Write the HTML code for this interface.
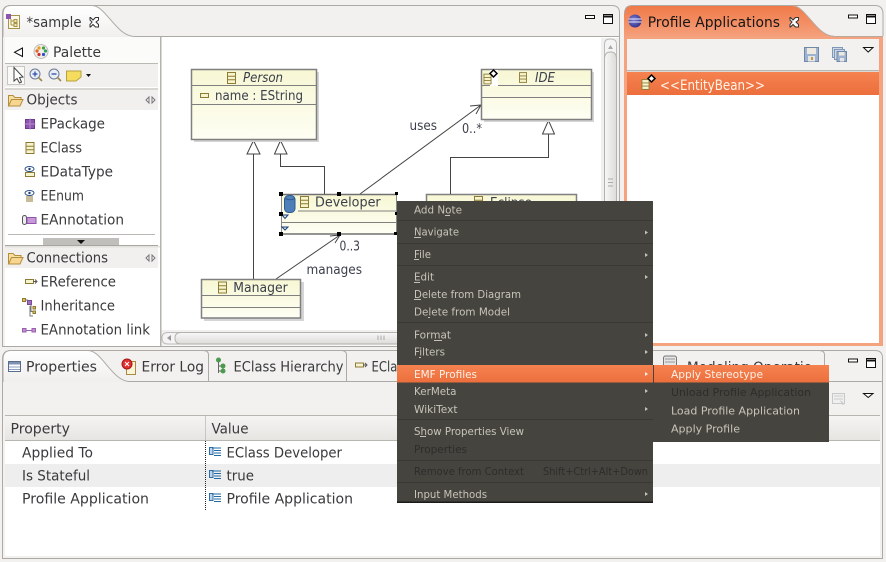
<!DOCTYPE html>
<html><head><meta charset="utf-8"><style>
html,body{margin:0;padding:0;background:#f2f1f0}
svg{display:block}
text{font-family:"DejaVu Sans","Liberation Sans",sans-serif;font-size:14px;fill:#3a3a3c}
.m{font-size:11px;fill:#c8c4b8}
.d{font-size:11px;fill:#2e2d2a}
.w{font-size:11px;fill:#fdf0e6}
.n{font-size:13px;fill:#3b3f4a}
.i{font-size:13px;font-style:italic;fill:#3b3f4a}
.u{stroke:#c4c0b4;stroke-width:1}
.sep{stroke:#3a3936;stroke-width:1}
.b{fill:none;stroke:#adaaa5;stroke-width:1}
.l{fill:none;stroke:#444;stroke-width:1}
.nd{stroke:#7f7f7f;stroke-width:1.5;fill:url(#ng)}
.arw{fill:#c4c0b4}
</style></head><body>
<svg width="886" height="562" viewBox="0 0 886 562" xmlns="http://www.w3.org/2000/svg">
<defs>
<linearGradient id="tab" x1="0" y1="0" x2="0" y2="1"><stop offset="0" stop-color="#ffffff"/><stop offset="1" stop-color="#f0efed"/></linearGradient>
<linearGradient id="otab" x1="0" y1="0" x2="0" y2="1"><stop offset="0" stop-color="#f07a48"/><stop offset="1" stop-color="#f5a27f"/></linearGradient>
<linearGradient id="sel" x1="0" y1="0" x2="0" y2="1"><stop offset="0" stop-color="#f58250"/><stop offset="1" stop-color="#ec6f3d"/></linearGradient>
<linearGradient id="ng" x1="0" y1="0" x2="0" y2="1"><stop offset="0" stop-color="#f7f7d4"/><stop offset="1" stop-color="#fefef4"/></linearGradient>
<linearGradient id="hdr" x1="0" y1="0" x2="0" y2="1"><stop offset="0" stop-color="#f6f5f4"/><stop offset="1" stop-color="#e6e5e2"/></linearGradient>
<linearGradient id="vs" x1="0" y1="0" x2="1" y2="0"><stop offset="0" stop-color="#f8f8f8"/><stop offset="1" stop-color="#dcdbd9"/></linearGradient>
<linearGradient id="hs" x1="0" y1="0" x2="0" y2="1"><stop offset="0" stop-color="#f8f8f8"/><stop offset="1" stop-color="#dcdbd9"/></linearGradient>
<radialGradient id="ec" cx=".4" cy=".4" r=".7"><stop offset="0" stop-color="#7f7fd8"/><stop offset="1" stop-color="#2a2a80"/></radialGradient>
<clipPath id="eclip"><rect x="426" y="190" width="151" height="11"/></clipPath>
<clipPath id="modclip"><rect x="655" y="350" width="170" height="15"/></clipPath>
<symbol id="cls" viewBox="0 0 9 12" overflow="visible"><rect x=".5" y=".5" width="8" height="11" fill="#f6f4cc" stroke="#8d7a35"/><path d="M.5 4.200H8.500M.5 7.800H8.500" stroke="#8d7a35"/></symbol>
<symbol id="lst" viewBox="0 0 13 10"><rect x=".5" y=".5" width="3.500" height="7" fill="#bcd4ec" stroke="#2d6ea8"/><path d="M3 1H12M5 3.500H12M5 6H12M5 8.500H12" stroke="#1f6aa5" stroke-width="1.100"/></symbol>
</defs>

<rect width="886" height="562" fill="#f2f1f0"/>

<!-- EDITOR PANE -->
<rect x="5" y="37" width="614" height="309" fill="#fff"/>
<path class="b" d="M2.500 346.500V14Q2.500 5.500 11 5.500H612Q619.500 5.500 619.500 13V346.500H2.500Z"/>
<path d="M3 37V14Q3 6 11 6H92C106 6 116 36 135 36V37Z" fill="url(#tab)"/>
<path class="b" d="M3 37V14Q3 5.500 11 5.500H92C106 5.500 116 36.500 135 36.500H619"/>
<rect x="3" y="347" width="617" height="2" fill="#f2f1f0"/>

<!-- tab *sample -->
<path d="M8.500 15.500H19.500V28.500H8.500Z" fill="#fbf9ea" stroke="#a6924a"/>
<rect x="6" y="14" width="5" height="5" fill="#8e55b0"/>
<path d="M11 21H14M11 25H14M11 19V25" stroke="#a6924a" fill="none"/>
<rect x="14" y="19.500" width="3" height="3" fill="#f6e8a8" stroke="#a6924a"/><rect x="14" y="23.500" width="3" height="3" fill="#f6e8a8" stroke="#a6924a"/>
<text x="26.500" y="27" textLength="55" lengthAdjust="spacingAndGlyphs">*sample</text>
<path d="M90.500 17.500L93 20L95.500 17.500L98.500 17.500L98.500 20L96 22L98.500 24.500L98.500 27L95.500 27L93 24.500L90.500 27L90 27L90 24.500L92 22L90 20L90 17.500Z" fill="#fff" stroke="#333" stroke-width="1"/>
<rect x="585.500" y="15.500" width="9" height="3" fill="#fff" stroke="#111"/>
<rect x="603.500" y="14.500" width="9" height="9" fill="#fff" stroke="#111"/><path d="M603 16.500H613" stroke="#111" stroke-width="2"/>

<!-- palette -->
<rect x="5" y="37" width="155" height="26" fill="#fbfbfa"/>
<rect x="5" y="63" width="153" height="1" fill="#bbb9b4"/>
<rect x="5" y="64" width="153" height="23" fill="#f1f0ee"/>
<rect x="5" y="88" width="153" height="2" fill="#d8d6d2"/>
<rect x="5" y="90" width="153" height="20" fill="#f1f0ee"/>
<rect x="5" y="110" width="155" height="124" fill="#fff"/>
<rect x="160" y="37" width="1.500" height="309" fill="#b5b3ae"/>
<path d="M22.500 48V56.500L14.500 52.300Z" fill="#fff" stroke="#111"/>
<circle cx="41" cy="51.500" r="7" fill="#f0efe9" stroke="#bdbdbd"/>
<circle cx="39" cy="48" r="1.600" fill="#e8a020"/><circle cx="43.500" cy="48" r="1.600" fill="#44a044"/>
<circle cx="37" cy="51" r="1.600" fill="#e86020"/><circle cx="45.500" cy="51" r="1.600" fill="#30a060"/>
<circle cx="39" cy="54.500" r="1.600" fill="#d03030"/><circle cx="43.500" cy="54.500" r="1.600" fill="#3050d0"/>
<text x="53" y="57" textLength="48" lengthAdjust="spacingAndGlyphs">Palette</text>
<rect x="7.500" y="66.500" width="17" height="18" fill="#f9f9f8" stroke="#c8c6c2"/>
<path d="M14 67.500V81L17 78.500L19.500 83L21.500 82L19.500 77.500L23 77Z" fill="#fff" stroke="#444"/>
<circle cx="35" cy="74" r="5" fill="#e8edf6" stroke="#6b7a94"/><path d="M32.500 74H37.500M35 71.500V76.500" stroke="#2a4fa8" stroke-width="1.300"/><path d="M38.500 77.500L42 81" stroke="#a08848" stroke-width="1.600"/>
<circle cx="54" cy="74" r="5" fill="#e8edf6" stroke="#6b7a94"/><path d="M51.500 74H56.500" stroke="#2a4fa8" stroke-width="1.300"/><path d="M57.500 77.500L61 81" stroke="#a08848" stroke-width="1.600"/>
<path d="M66.500 71H81V77L76 81H66.500Z" fill="#f5dc5e" stroke="#b8a23e"/>
<path d="M86 74H91L88.500 77Z" fill="#111"/>
<path d="M8.500 106V95.500H13L15 97.500H21V99" fill="#f3e0a4" stroke="#b78d3c"/><path d="M8.500 106L11.500 99.500H23L20 106Z" fill="#f6d690" stroke="#b78d3c"/>
<text x="26.500" y="104.500" textLength="51" lengthAdjust="spacingAndGlyphs">Objects</text>
<path d="M146 100L149 97V103ZM155 100L152 97V103Z" fill="#f8f8f8" stroke="#777"/>

<rect x="25.500" y="119.500" width="9" height="9" fill="#8e55b0" stroke="#6b3a8c"/><path d="M24.500 124H35.500M30 118.500V129.500" stroke="#b58ccb"/>
<text x="40.500" y="128.500" textLength="64.500" lengthAdjust="spacingAndGlyphs">EPackage</text>
<use href="#cls" x="25.500" y="142" width="9" height="12"/>
<text x="40.500" y="152.500" textLength="41.500" lengthAdjust="spacingAndGlyphs">EClass</text>
<ellipse cx="29.500" cy="169" rx="4.500" ry="2.500" fill="#fff" stroke="#2a4f88"/><circle cx="29.500" cy="169" r="1.200" fill="#1a3f78"/><rect x="25.500" y="172.500" width="9" height="4" fill="#f6f4cc" stroke="#8d7a35"/>
<text x="40.500" y="176.500" textLength="72.500" lengthAdjust="spacingAndGlyphs">EDataType</text>
<ellipse cx="29.500" cy="193" rx="4.500" ry="2.500" fill="#fff" stroke="#2a4f88"/><circle cx="29.500" cy="193" r="1.200" fill="#1a3f78"/><path d="M26 197H33M26 199H33M26 201H33" stroke="#8d7a35"/>
<text x="40.500" y="200.500" textLength="43.500" lengthAdjust="spacingAndGlyphs">EEnum</text>
<rect x="22.500" y="215.500" width="4" height="9" rx="2" fill="#eee" stroke="#555"/><rect x="27" y="217.500" width="9" height="6" fill="#c79ad6" stroke="#8e55b0"/>
<text x="40.500" y="224.700" textLength="83.500" lengthAdjust="spacingAndGlyphs">EAnnotation</text>
<rect x="8" y="234" width="147" height="1" fill="#bbb9b4"/>
<rect x="43" y="238" width="76" height="7" fill="#c1bfbc"/>
<path d="M77 240H85L81 244Z" fill="#111"/>
<rect x="5" y="245" width="153" height="1" fill="#a9a7a2"/>
<rect x="5" y="246" width="155" height="1.500" fill="#e4e2df"/>
<rect x="5" y="247.500" width="153" height="20.500" fill="#f1f0ee"/>
<rect x="5" y="268" width="155" height="78" fill="#fff"/>
<path d="M8.500 264V253.500H13L15 255.500H21V257" fill="#f3e0a4" stroke="#b78d3c"/><path d="M8.500 264L11.500 257.500H23L20 264Z" fill="#f6d690" stroke="#b78d3c"/>
<text x="26.500" y="262.700" textLength="81.500" lengthAdjust="spacingAndGlyphs">Connections</text>
<path d="M146 258L149 255V261ZM155 258L152 255V261Z" fill="#f8f8f8" stroke="#777"/>
<rect x="25.500" y="279.500" width="8" height="4" fill="#f6f4cc" stroke="#8d7a35"/><path d="M33 281.500H36M35 279.500L37 281.500L35 283.500" stroke="#555" fill="none"/>
<text x="40.500" y="286.700" textLength="75.500" lengthAdjust="spacingAndGlyphs">EReference</text>
<rect x="22.500" y="298.500" width="3" height="3" fill="#e0c050" stroke="#8d7a35"/><rect x="27.500" y="300.500" width="4" height="4" fill="#a070c0" stroke="#7a4a9a"/><path d="M25.500 300H28M31 304.500V311.500H33M30 306V316H33" stroke="#777" fill="none"/><rect x="33" y="306.500" width="2.500" height="2.500" fill="#e0c050" stroke="#8d7a35"/><rect x="33" y="311" width="2.500" height="2.500" fill="#e0c050" stroke="#8d7a35"/>
<text x="40.500" y="310.700" textLength="74.500" lengthAdjust="spacingAndGlyphs">Inheritance</text>
<rect x="22.500" y="328.500" width="3.500" height="3.500" fill="#c090d0" stroke="#9a60b0"/><rect x="32" y="328.500" width="3.500" height="3.500" fill="#c090d0" stroke="#9a60b0"/><path d="M26 330.500H32" stroke="#9a60b0"/>
<text x="40.500" y="334.700" textLength="109.500" lengthAdjust="spacingAndGlyphs">EAnnotation link</text>

<!-- connectors -->
<path class="l" d="M253.500 154V279"/>
<path d="M253.500 140.500L247 154H260Z" fill="#fff" stroke="#444"/>
<path class="l" d="M280.500 154V166.500H324.500V194"/>
<path d="M280.500 140.500L274.500 154H287Z" fill="#fff" stroke="#444"/>
<path class="l" d="M548.500 134V157.500H450.500V194"/>
<path d="M548.500 120.500L542.500 134H554.500Z" fill="#fff" stroke="#444"/>
<path class="l" d="M360 194L481 105M470 106L481 105L476 114"/>
<path class="l" d="M276 279L340 235M330 236L340 235L335 243"/>

<text x="409.500" y="130" textLength="27.500" lengthAdjust="spacingAndGlyphs" class="n">uses</text>
<text x="462" y="133" textLength="20" lengthAdjust="spacingAndGlyphs" class="n">0..*</text>
<text x="339.500" y="250.700" textLength="20.500" lengthAdjust="spacingAndGlyphs" class="n">0..3</text>
<text x="306.500" y="274" textLength="55.500" lengthAdjust="spacingAndGlyphs" class="n">manages</text>

<!-- Person -->
<rect x="194" y="72" width="125" height="70" fill="#d5d5d5"/>
<rect x="191.500" y="69.500" width="125" height="70" class="nd"/>
<path d="M191 85.500H316M191 104.500H316" stroke="#7f7f7f" stroke-width="1"/>
<use href="#cls" x="227" y="72" width="9" height="12"/>
<text x="243" y="82" textLength="40" lengthAdjust="spacingAndGlyphs" class="i">Person</text>
<rect x="200.500" y="93.500" width="8" height="4" fill="#f6f4cc" stroke="#8d7a35"/>
<text x="215" y="100" textLength="88" lengthAdjust="spacingAndGlyphs" class="n">name : EString</text>

<!-- IDE -->
<rect x="484" y="72" width="110" height="50" fill="#d5d5d5"/>
<rect x="481.500" y="69.500" width="110" height="50" class="nd"/>
<path d="M481 85.500H591M481 97.500H591" stroke="#7f7f7f" stroke-width="1"/>
<rect x="490" y="70" width="8" height="16" fill="#fff"/>
<use href="#cls" x="483.500" y="73" width="8" height="12"/>
<path d="M493.500 70L490 73.500L493.500 77L497 73.500Z" fill="#fff" stroke="#000" stroke-width="1.500"/>
<use href="#cls" x="519" y="71" width="8" height="13"/>
<text x="535" y="82" textLength="20" lengthAdjust="spacingAndGlyphs" class="i">IDE</text>

<!-- Eclipse -->
<rect x="426.500" y="194.500" width="150" height="30" class="nd"/>
<g clip-path="url(#eclip)"><use href="#cls" x="474" y="196" width="9" height="12"/><text x="490" y="207" textLength="42" lengthAdjust="spacingAndGlyphs" class="n">Eclipse</text></g>
<path class="l" d="M450.500 157V194"/>

<!-- Developer -->
<rect x="281.500" y="194.500" width="115" height="39.500" fill="url(#ng)"/>
<path d="M281 194.500H397M281 234H397" stroke="#707070" stroke-width="1.500"/>
<path d="M281.500 194V234M396.500 194V234" stroke="#888"/>
<path d="M298 211H397M281 222.500H397" stroke="#808080"/>
<rect x="284.500" y="195.500" width="10.500" height="17" rx="4" fill="#4f7fb8" stroke="#2e5a90"/><path d="M285 198.500Q290 201 295 198.500" stroke="#2e5a90" fill="none"/>
<use href="#cls" x="300" y="196" width="9" height="12"/>
<text x="315" y="206.700" textLength="65.700" lengthAdjust="spacingAndGlyphs" class="n">Developer</text>
<path d="M282 215H288L285 218.500Z M282 227H288L285 230Z" fill="#dfeefa" stroke="#1a3f78"/>
<g fill="#000"><rect x="279" y="192" width="4" height="4"/><rect x="337" y="192" width="4" height="4"/><rect x="395" y="192" width="3" height="3"/><rect x="279" y="212" width="4" height="4"/><rect x="395" y="212" width="3" height="3"/><rect x="279" y="232" width="4" height="4"/><rect x="337" y="232" width="4" height="4"/><rect x="394" y="232" width="3" height="3"/></g>

<!-- Manager -->
<rect x="204" y="282" width="100" height="39" fill="#d5d5d5"/>
<rect x="201.500" y="279.500" width="99" height="38.500" class="nd"/>
<path d="M201 295.500H301M201 307.500H301" stroke="#7f7f7f"/>
<use href="#cls" x="218" y="281" width="9" height="13"/>
<text x="233.300" y="292" textLength="54.400" lengthAdjust="spacingAndGlyphs" class="n">Manager</text>

<!-- scrollbars -->
<rect x="601" y="38" width="18" height="292" fill="#f1f0ef"/>
<path d="M604.500 330V44Q604.500 39 610 39Q616.500 39 616.500 44V330" fill="#f4f4f4" stroke="#bbb"/>
<path d="M608 49L610.500 45L613 49Z" fill="#aaa"/>
<path d="M604.500 250V59Q604.500 52 610.500 52Q616.500 52 616.500 59V250Z" fill="url(#vs)" stroke="#b4b2ad"/>
<path d="M608 179H613M608 182.500H613M608 186H613" stroke="#aaa"/>
<rect x="161.500" y="330" width="458" height="15.500" fill="#f1f0ef"/>
<path d="M400 332.500H168Q162 332.500 162 338Q162 344 168 344H400" fill="#f4f4f4" stroke="#bbb"/>
<path d="M171 335V341L167 338Z" fill="#999"/>
<path d="M400 332.500H181Q175 332.500 175 338Q175 344 181 344H400Z" fill="url(#hs)" stroke="#b4b2ad"/>
<path d="M378 335.500V340M381 335.500V340M384 335.500V340" stroke="#aaa"/>

<!-- RIGHT PANE -->
<path d="M624 346V14Q624 6 632 6H792C806 6 816 36 835 36H883V346Z" fill="#f5a27f"/>
<path d="M792 6C806 6 816 36 835 36H883V14Q883 5.500 875 5.500H792Z" fill="#f2f1f0"/>
<path d="M624 14Q624 6 632 6H792C806 6 816 36 835 36H627V39H624Z" fill="url(#otab)"/>
<path class="b" d="M624.500 14Q624.500 5.500 632 5.500H875Q883 5.500 883 14V36"/>
<path d="M792 5.500C806 5.500 816 36.500 835 36.500H883" fill="none" stroke="#b8a89e"/>
<rect x="627" y="39" width="252" height="31" fill="#f2f1f0"/>
<rect x="627" y="70" width="252" height="1.500" fill="#b8b6b1"/>
<rect x="627" y="71.500" width="252" height="271.500" fill="#fff"/>
<rect x="627" y="72" width="252" height="23" fill="url(#sel)"/>
<circle cx="635" cy="21" r="6.500" fill="url(#ec)"/><path d="M628.500 19H641.500M628.500 22H641.500" stroke="#e8e8f8"/>
<text x="647.700" y="27" textLength="132.300" lengthAdjust="spacingAndGlyphs" style="fill:#161616">Profile Applications</text>
<path d="M790.500 17.500L793 20L795.500 17.500L798.500 17.500L798.500 20L796 22L798.500 24.500L798.500 27L795.500 27L793 24.500L790.500 27L790 27L790 24.500L792 22L790 20L790 17.500Z" fill="#fff" stroke="#333"/>
<rect x="848.500" y="15" width="9" height="3" fill="#fff" stroke="#111"/>
<rect x="866.500" y="14.500" width="9" height="9" fill="#fff" stroke="#111"/><path d="M866 16.500H876" stroke="#111" stroke-width="2"/>
<rect x="804.500" y="47.500" width="14" height="14" fill="#9db3d0" stroke="#7088a8"/><rect x="807" y="48" width="9" height="6" fill="#efeae0"/><rect x="808" y="56" width="7" height="5.500" fill="#e4e6ea"/><rect x="811" y="57" width="2" height="3" fill="#c09a40"/>
<rect x="832.500" y="47.500" width="10" height="10" fill="#cfd8e6" stroke="#8098b8"/><rect x="834.500" y="49.500" width="10" height="10" fill="#cfd8e6" stroke="#8098b8"/>
<rect x="837" y="51.500" width="9.500" height="10" fill="#9db3d0" stroke="#7088a8"/><rect x="839" y="52" width="5.500" height="3.500" fill="#efeae0"/><rect x="840" y="58" width="4" height="3.500" fill="#e4e6ea"/>
<path d="M863.500 47.500H873L868.200 52Z" fill="#fff" stroke="#111"/>
<use href="#cls" x="641.500" y="78" width="8" height="13"/>
<path d="M651.500 75L648 78.500L651.500 82L655 78.500Z" fill="#fff" stroke="#000" stroke-width="1.500"/>
<text x="660" y="90" textLength="105" lengthAdjust="spacingAndGlyphs" style="fill:#fff3e8">&lt;&lt;EntityBean&gt;&gt;</text>

<!-- BOTTOM PANE -->
<path class="b" d="M2.500 558.500V359Q2.500 350.500 11 350.500H875Q882.500 350.500 882.500 358V558.500Z"/>
<path d="M5 381.500H880V556H5Z" fill="#f2f1f0"/>
<path d="M3 382V359Q3 350.500 11 350.500H88C102 350.500 112 381 130 381V382Z" fill="url(#tab)"/>
<path class="b" d="M3 382V359Q3 350.500 11 350.500H88C102 350.500 112 381.500 130 381.500H882"/>
<path class="b" d="M208.500 381V355Q208.500 350.500 203 350.500M346.500 381V355Q346.500 350.500 341 350.500M824.500 381V355Q824.500 350.500 819 350.500"/>
<rect x="8.500" y="361.500" width="12" height="10" fill="#fff" stroke="#5a6c8c"/><path d="M9 364H20M9 367H20M9 369.500H20" stroke="#8aa0c0"/><rect x="9" y="362" width="11" height="2.500" fill="#7d92b4"/>
<text x="26" y="371.700" textLength="71" lengthAdjust="spacingAndGlyphs">Properties</text>
<rect x="126.500" y="361.500" width="9" height="13" fill="#fbf4d8" stroke="#a88a40"/>
<circle cx="127" cy="364" r="5" fill="#e23030" stroke="#a01818"/><path d="M125 362L129 366M129 362L125 366" stroke="#fff"/>
<text x="141.500" y="371.700" textLength="62.500" lengthAdjust="spacingAndGlyphs">Error Log</text>
<circle cx="218.500" cy="360" r="2.500" fill="#4a9a50"/><circle cx="223" cy="366" r="2.500" fill="#4a9a50"/><circle cx="223" cy="371" r="2.500" fill="#4a9a50"/><path d="M218.500 362V373M218.500 366H221M218.500 371H221" stroke="#666" fill="none"/>
<text x="233.500" y="371.700" textLength="110" lengthAdjust="spacingAndGlyphs">EClass Hierarchy</text>
<rect x="355.500" y="363" width="8" height="4" fill="#f6f4cc" stroke="#8d7a35"/><path d="M363 365H366M365 363L367 365L365 367" stroke="#555" fill="none"/>
<text x="371.500" y="371.700" textLength="38" lengthAdjust="spacingAndGlyphs">EClass</text>
<g clip-path="url(#modclip)"><rect x="663.500" y="356" width="13" height="15" rx="2" fill="#e4e4e4" stroke="#777"/><path d="M665 359H675M665 362H675" stroke="#999"/><text x="687" y="372" textLength="125" lengthAdjust="spacingAndGlyphs">Modeling Operatio</text></g>
<rect x="848.500" y="359" width="9" height="3" fill="#fff" stroke="#111"/>
<rect x="866.500" y="358.500" width="9" height="9" fill="#fff" stroke="#111"/><path d="M866 360.500H876" stroke="#111" stroke-width="2"/>
<rect x="832.500" y="393.500" width="12" height="10" fill="#efefef" stroke="#c8c8c8"/><path d="M834 396H843M834 399H843" stroke="#ccc"/><path d="M840 400L845 404L842 405Z" fill="#ccc"/>
<path d="M863.500 393.500H873L868.200 397.500Z" fill="#fff" stroke="#111"/>

<!-- table -->
<rect x="5" y="415" width="875" height="25" fill="url(#hdr)"/>
<rect x="5" y="415" width="875" height="1" fill="#b8b6b1"/>
<rect x="5" y="440" width="875" height="1" fill="#b8b6b1"/>
<rect x="205" y="416" width="1" height="24" fill="#c8c6c2"/>
<rect x="5" y="441" width="875" height="115" fill="#fff"/>
<rect x="5" y="464" width="875" height="23" fill="#eeeeee"/>
<path d="M205.500 441V510" stroke="#222" stroke-dasharray="1 1"/>
<text x="10.500" y="433.500" textLength="59.500" lengthAdjust="spacingAndGlyphs">Property</text>
<text x="211.500" y="433.500" textLength="37" lengthAdjust="spacingAndGlyphs">Value</text>
<text x="22" y="457.700" textLength="71" lengthAdjust="spacingAndGlyphs">Applied To</text>
<text x="22" y="480.700" textLength="68" lengthAdjust="spacingAndGlyphs">Is Stateful</text>
<text x="22" y="503.700" textLength="127" lengthAdjust="spacingAndGlyphs">Profile Application</text>
<use href="#lst" x="209" y="447" width="13" height="10"/>
<use href="#lst" x="209" y="470" width="13" height="10"/>
<use href="#lst" x="209" y="493" width="13" height="10"/>
<text x="226.500" y="457.700" textLength="115.500" lengthAdjust="spacingAndGlyphs">EClass Developer</text>
<text x="226.500" y="480.700" textLength="27.500" lengthAdjust="spacingAndGlyphs">true</text>
<text x="226.500" y="503.700" textLength="126.500" lengthAdjust="spacingAndGlyphs">Profile Application</text>

<!-- CONTEXT MENU -->
<rect x="397" y="201" width="256" height="302" fill="#45443f"/>
<rect x="397" y="501.500" width="256" height="1.500" fill="#1c1b19"/>
<path class="sep" d="M397 220.500H653M397 243.500H653M397 265.500H653M397 322.500H653M397 419.500H653M397 460.500H653M397 482.500H653"/>
<rect x="397" y="365" width="256" height="17.500" fill="url(#sel)"/>
<rect x="653" y="365" width="176" height="77" fill="#45443f"/>
<rect x="654" y="365" width="175" height="17.500" fill="url(#sel)"/>

<text class="m" x="414" y="213.700" textLength="48" lengthAdjust="spacingAndGlyphs">Add Note</text>
<text class="m" x="414" y="235.700" textLength="45" lengthAdjust="spacingAndGlyphs">Navigate</text>
<text class="m" x="414" y="258" textLength="17" lengthAdjust="spacingAndGlyphs">File</text>
<text class="m" x="414" y="280.700" textLength="20" lengthAdjust="spacingAndGlyphs">Edit</text>
<text class="m" x="414" y="298" textLength="107" lengthAdjust="spacingAndGlyphs">Delete from Diagram</text>
<text class="m" x="414" y="315.700" textLength="96" lengthAdjust="spacingAndGlyphs">Delete from Model</text>
<text class="m" x="414" y="338.700" textLength="37" lengthAdjust="spacingAndGlyphs">Format</text>
<text class="m" x="414" y="355.700" textLength="31" lengthAdjust="spacingAndGlyphs">Filters</text>
<text class="w" x="414" y="378" textLength="63" lengthAdjust="spacingAndGlyphs">EMF Profiles</text>
<text class="m" x="414" y="395" textLength="42.500" lengthAdjust="spacingAndGlyphs">KerMeta</text>
<text class="m" x="414" y="413" textLength="43.500" lengthAdjust="spacingAndGlyphs">WikiText</text>
<text class="m" x="414" y="435" textLength="110" lengthAdjust="spacingAndGlyphs">Show Properties View</text>
<text class="d" x="414" y="453" textLength="53" lengthAdjust="spacingAndGlyphs">Properties</text>
<text class="d" x="414" y="475" textLength="110" lengthAdjust="spacingAndGlyphs">Remove from Context</text>
<text class="d" x="543" y="475" textLength="105" lengthAdjust="spacingAndGlyphs">Shift+Ctrl+Alt+Down</text>
<text class="m" x="414" y="498" textLength="73" lengthAdjust="spacingAndGlyphs">Input Methods</text>
<path class="u" d="M445 215.500H450M414 237.500H421M414 259.500H419M414 282.500H420M414 299.500H421M428 317.500H430M434 340.500H442M419 357.500H421M420 436.500H426"/>
<g class="arw"><path d="M645 230.500L648 232.500L645 234.500ZM645 253L648 255L645 257ZM645 275L648 277L645 279ZM645 333L648 335L645 337ZM645 350L648 352L645 354ZM645 389L648 391L645 393ZM645 407L648 409L645 411ZM645 492L648 494L645 496Z"/><path d="M645 372L648 374L645 376Z" fill="#fdf0e6"/></g>

<text class="w" x="671" y="378" textLength="92" lengthAdjust="spacingAndGlyphs">Apply Stereotype</text>
<text class="d" x="671" y="396" textLength="140" lengthAdjust="spacingAndGlyphs">Unload Profile Application</text>
<text class="m" x="671" y="414.500" textLength="129" lengthAdjust="spacingAndGlyphs">Load Profile Application</text>
<text class="m" x="671" y="432.500" textLength="69" lengthAdjust="spacingAndGlyphs">Apply Profile</text>
</svg>
</body></html>
